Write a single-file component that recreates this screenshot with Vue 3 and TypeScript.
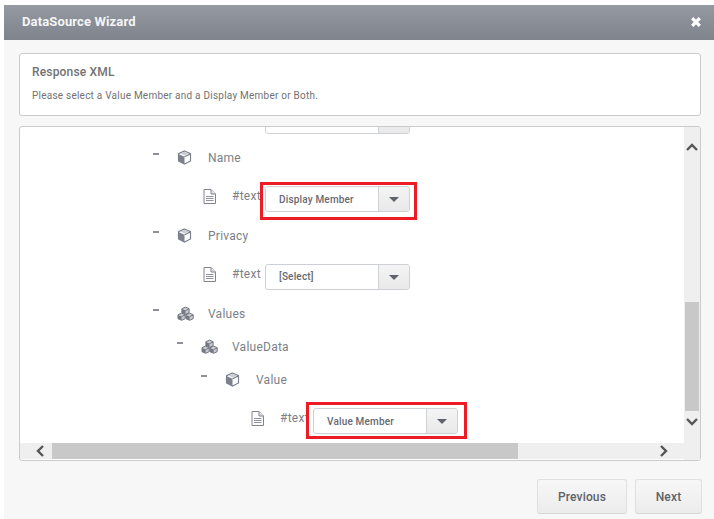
<script setup lang="ts">
type Kind = 'cube' | 'cubes' | 'file'
type Mark = 'tight' | 'wide'
interface Row {
  level: number
  kind: Kind
  label: string
  select?: string
  mark?: Mark
}
const rows: Row[] = [
  { level: 1, kind: 'file', label: '#text', select: '[Select]' },
  { level: 0, kind: 'cube', label: 'Name' },
  { level: 1, kind: 'file', label: '#text', select: 'Display Member', mark: 'tight' },
  { level: 0, kind: 'cube', label: 'Privacy' },
  { level: 1, kind: 'file', label: '#text', select: '[Select]' },
  { level: 0, kind: 'cubes', label: 'Values' },
  { level: 1, kind: 'cubes', label: 'ValueData' },
  { level: 2, kind: 'cube', label: 'Value' },
  { level: 3, kind: 'file', label: '#text', select: 'Value Member', mark: 'wide' }
]
const BASE = 133
const STEP = 24
const indent = (r: Row) => `${BASE + STEP * r.level}px`
</script>

<template>
  <div class="dialog">
    <header class="titlebar">
      <span class="title">DataSource Wizard</span>
      <svg class="close" width="12" height="12" viewBox="0 0 12 12" aria-label="Close">
        <path d="M2.2 2.2 L9.8 9.8 M9.8 2.2 L2.2 9.8" stroke="#fff" stroke-width="3.2" fill="none" />
      </svg>
    </header>

    <main class="body">
      <section class="panel intro">
        <h2>Response XML</h2>
        <p>Please select a Value Member and a Display Member or Both.</p>
      </section>

      <section class="panel scroller">
        <div class="viewport">
          <div class="tree">
            <div
              v-for="(r, i) in rows"
              :key="i"
              class="row"
              :class="r.kind === 'file' ? 'leaf' : 'node'"
              :style="{ paddingLeft: indent(r) }"
            >
              <template v-if="r.kind !== 'file'">
                <span class="minus"></span>
                <span class="icon-box">
                  <svg v-if="r.kind === 'cube'" width="15" height="15" viewBox="0 0 15 15">
                    <path d="M7.5 1 L13.5 3.7 V11 L7.5 14 L1.5 11 V3.7 Z" fill="#fff" stroke="#7d818c" stroke-width="1.2" />
                    <path d="M1.5 4 L7.5 6.8 V14 L1.5 11 Z" fill="#7d818c" />
                    <path d="M7.5 6.8 L13.5 3.9" fill="none" stroke="#7d818c" stroke-width="1.2" />
                    <path d="M3.5 3.6 L7.5 1.8 L11.5 3.6 L7.5 5.4 Z" fill="#c9cbd0" />
                  </svg>
                  <svg v-else width="17" height="15" viewBox="0 0 17 15">
                    <g v-for="c in [[4.5, 0.8], [0.6, 6.8], [8.6, 6.8]]" :key="c[0]" :transform="`translate(${c[0]} ${c[1]})`">
                      <path d="M4 0.3 L7.6 1.9 V5.9 L4 7.5 L0.4 5.9 V1.9 Z" fill="#c9cbd0" stroke="#747883" stroke-width="1" />
                      <path d="M0.4 2.2 L4 3.8 V7.5 L0.4 5.9 Z" fill="#747883" />
                      <path d="M4 3.8 L7.6 2.2" fill="none" stroke="#747883" stroke-width="1" />
                    </g>
                  </svg>
                </span>
                <span class="label">{{ r.label }}</span>
              </template>
              <template v-else>
                <svg class="file" width="13" height="15" viewBox="0 0 13 15">
                  <path d="M1 0.5 H8 L12.5 5 V14.5 H1 Z" fill="#fff" stroke="#80848e" />
                  <path d="M8 0.5 V5 H12.5" fill="#e4e5e8" stroke="#80848e" />
                  <path d="M3 7.5 H10.5 M3 9.5 H10.5 M3 11.5 H10.5" stroke="#8f929b" />
                </svg>
                <span class="hash">{{ r.label }}</span>
                <span class="select-wrap" :class="r.mark">
                  <span class="select">
                    <span class="value">{{ r.select }}</span>
                    <span class="arrow"><i></i></span>
                  </span>
                </span>
              </template>
            </div>
          </div>
        </div>

        <div class="vbar">
          <button class="arrow-btn up" aria-label="Scroll up">
            <svg width="14" height="10" viewBox="0 0 14 10"><path d="M2 8 L7 3 L12 8" fill="none" stroke="#555" stroke-width="2.4" /></svg>
          </button>
          <div class="vtrack"><div class="vthumb"></div></div>
          <button class="arrow-btn down" aria-label="Scroll down">
            <svg width="14" height="10" viewBox="0 0 14 10"><path d="M2 2 L7 7 L12 2" fill="none" stroke="#555" stroke-width="2.4" /></svg>
          </button>
        </div>

        <div class="hbar">
          <button class="harrow left" aria-label="Scroll left">
            <svg width="10" height="14" viewBox="0 0 10 14"><path d="M8 2 L3 7 L8 12" fill="none" stroke="#555" stroke-width="2.4" /></svg>
          </button>
          <div class="htrack"><div class="hthumb"></div></div>
          <button class="harrow right" aria-label="Scroll right">
            <svg width="10" height="14" viewBox="0 0 10 14"><path d="M2 2 L7 7 L2 12" fill="none" stroke="#555" stroke-width="2.4" /></svg>
          </button>
        </div>
        <div class="corner"></div>
      </section>
    </main>

    <footer class="footer">
      <button class="btn prev">Previous</button>
      <button class="btn next">Next</button>
    </footer>
  </div>
</template>

<style>
html, body { margin: 0; background: #fff; }
</style>

<style scoped>
.dialog {
  box-sizing: border-box;
  width: 710px;
  height: 514px;
  margin: 5px 0 0 4px;
  background: #f7f7f7;
  font-family: Roboto, "Liberation Sans", sans-serif;
  display: flex;
  flex-direction: column;
}
.titlebar {
  flex: none;
  height: 35px;
  box-sizing: border-box;
  padding: 0 12px 2px 18px;
  display: flex;
  align-items: center;
  justify-content: space-between;
  background: linear-gradient(#9599a2, #7e838c);
}
.title { color: #f4f5f6; font-size: 13px; font-weight: 700; letter-spacing: .13px; }
.body {
  padding: 13px 10px 0 15px;
  display: flex;
  flex-direction: column;
  gap: 10px;
}
.panel {
  box-sizing: border-box;
  width: 682px;
  background: #fff;
  border: 1px solid #cbcbcb;
  border-radius: 3px;
}
.intro { height: 63px; padding: 11px 12px 0; }
.intro h2 { margin: 0; font-size: 12px; line-height: 14px; font-weight: 500; color: #727272; letter-spacing: .17px; }
.intro p { margin: 11px 0 0; font-size: 10px; line-height: 12px; color: #727272; letter-spacing: .23px; }

.scroller {
  height: 335px;
  display: grid;
  grid-template-columns: 1fr 16px;
  grid-template-rows: 316px 17px;
  overflow: hidden;
}
.viewport { overflow: hidden; }
.tree { margin-top: -31px; }
.row { display: flex; box-sizing: border-box; color: #7b7f87; }
.node { height: 33px; align-items: center; }
.leaf { height: 45px; padding-top: 12px; align-items: flex-start; }
.minus { width: 6px; height: 2px; background: #8d9098; margin: -7px 18px 0 0; flex: none; }
.icon-box { flex: none; width: 31px; display: flex; }
.label { font-size: 12px; letter-spacing: .25px; }
.file { flex: none; margin: 3px 0 0 26px; }
.hash { font-size: 12px; line-height: 14px; margin: 3px 0 0 16px; width: 33px; flex: none; white-space: nowrap; letter-spacing: .25px; }
.select-wrap { position: relative; display: block; }
.select-wrap.tight::after,
.select-wrap.wide::after {
  content: "";
  position: absolute;
  box-sizing: border-box;
  border: 3px solid #ed1c24;
  pointer-events: none;
}
.select-wrap.tight::after { left: -5px; top: -4px; width: 157px; height: 38px; }
.select-wrap.wide::after { left: -7px; top: -6px; width: 161px; height: 37px; }
.select {
  box-sizing: border-box;
  width: 145px;
  height: 26px;
  background: #fff;
  border: 1px solid #cdd0d5;
  border-radius: 3px;
  display: flex;
  overflow: hidden;
}
.value {
  flex: 1;
  padding-left: 13px;
  font-size: 10px;
  line-height: 24px;
  font-weight: 500;
  color: #666a72;
  letter-spacing: .17px;
}
.tight .value, .wide .value { line-height: 26px; }
.arrow {
  width: 30px;
  flex: none;
  border-left: 1px solid #cdd0d5;
  background: linear-gradient(#f4f4f4, #e9e9e9);
  display: flex;
  align-items: center;
  justify-content: center;
}
.arrow i {
  width: 0;
  height: 0;
  border-left: 5px solid transparent;
  border-right: 5px solid transparent;
  border-top: 5px solid #5f636b;
}

.vbar { background: #efefef; display: flex; flex-direction: column; }
.arrow-btn {
  flex: none;
  box-sizing: border-box;
  padding: 0;
  border: 0;
  background: none;
  display: flex;
  justify-content: center;
  align-items: flex-start;
}
.up { height: 40px; padding-top: 15px; }
.down { height: 32px; padding-top: 6px; }
.vtrack { flex: 1; display: flex; flex-direction: column; justify-content: flex-end; min-height: 0; }
.vthumb { height: 109px; background: #c8c8c8; margin: 0 1px; }

.hbar { background: #efefef; display: flex; height: 16px; }
.harrow { flex: none; box-sizing: border-box; width: 32px; padding: 0; border: 0; background: none; display: flex; align-items: center; justify-content: center; }
.harrow.left { padding-left: 8px; }
.harrow.right { padding-right: 8px; }
.htrack { flex: 1; min-width: 0; }
.hthumb { width: 466px; height: 16px; background: #c8c8c8; }
.corner { background: #efefef; }

.footer {
  flex: none;
  display: flex;
  justify-content: flex-end;
  gap: 8px;
  padding: 18px 12px 0 0;
}
.btn {
  box-sizing: border-box;
  height: 35px;
  padding: 0;
  font-family: inherit;
  font-size: 12px;
  font-weight: 500;
  letter-spacing: .15px;
  color: #5e626a;
  background: linear-gradient(#f7f7f7, #ececec);
  border: 1px solid #e0e0e0;
  border-bottom-color: #d6d6d6;
  border-radius: 3px;
}
.prev { width: 90px; }
.next { width: 67px; }
</style>
